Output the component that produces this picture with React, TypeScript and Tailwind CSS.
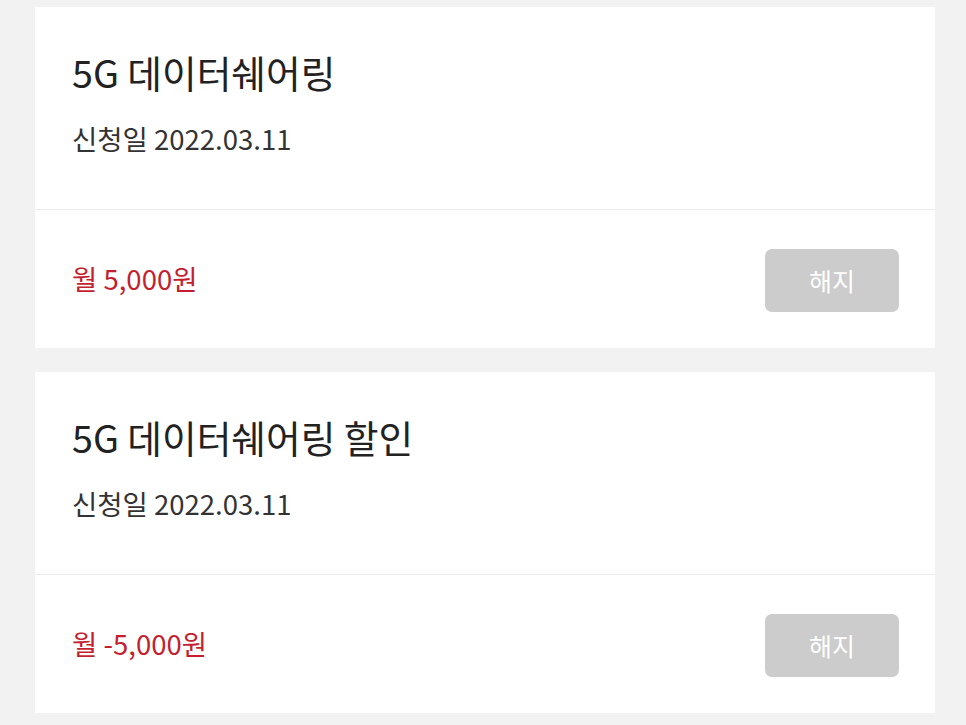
const items = [
  { name: "5G 데이터쉐어링", date: "2022.03.11", price: "월 5,000원" },
  { name: "5G 데이터쉐어링 할인", date: "2022.03.11", price: "월 -5,000원" },
]

function ServiceCard({ name, date, price }: { name: string; date: string; price: string }) {
  return (
    <div className="bg-white">
      <div className="h-[203px] border-b border-[#ececec] px-[37px] pt-[42px]">
        <h2 className="text-[37.7px] leading-[46px] text-[#222222]">{name}</h2>
        <p className="mt-[25px] text-[27.5px] leading-[36px] text-[#333333]">신청일 {date}</p>
      </div>
      <div className="flex h-[138px] items-center justify-between pl-[37px] pr-[36px]">
        <span className="text-[27.5px] text-[#c41f30]">{price}</span>
        <button className="mt-[3px] h-[63px] w-[134px] rounded-[7px] bg-[#cccccc] text-[25px] text-white">
          해지
        </button>
      </div>
    </div>
  )
}

export default function App() {
  return (
    <div
      className="min-h-[725px] bg-[#f2f2f2] px-[35px] pt-[7px] pr-[31px]"
      style={{ fontFamily: '"Noto Sans CJK KR", "Noto Sans", sans-serif' }}
    >
      <div className="flex flex-col gap-[24px]">
        {items.map((item) => (
          <ServiceCard key={item.name} {...item} />
        ))}
      </div>
    </div>
  )
}
